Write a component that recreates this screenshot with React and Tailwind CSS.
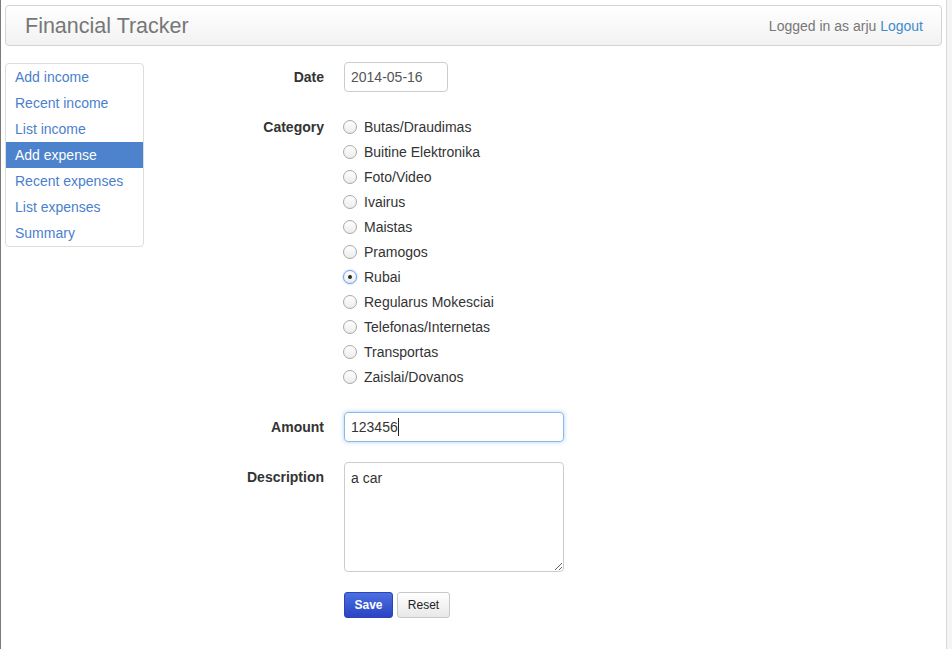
import React from 'react';

const menu = ['Add income', 'Recent income', 'List income', 'Add expense', 'Recent expenses', 'List expenses', 'Summary'];

const categories = [
  'Butas/Draudimas',
  'Buitine Elektronika',
  'Foto/Video',
  'Ivairus',
  'Maistas',
  'Pramogos',
  'Rubai',
  'Regularus Mokesciai',
  'Telefonas/Internetas',
  'Transportas',
  'Zaislai/Dovanos',
];

const Radio = ({ checked }) => (
  <span
    className={
      'w-[14px] h-[14px] rounded-full border flex items-center justify-center bg-gradient-to-b from-white to-[#ececec] ' +
      (checked ? 'border-[#6f9fe0] shadow-[0_0_2px_#8fb6f0]' : 'border-[#a8a8a8]')
    }
  >
    {checked && <span className="w-[4px] h-[4px] rounded-full bg-[#2b2b2b]" />}
  </span>
);

const Row = ({ label, children, className = '' }) => (
  <div className={'flex gap-5 ' + className}>
    <div className="w-[180px] shrink-0 text-right font-bold text-[#333] pt-[5px] leading-5">{label}</div>
    <div>{children}</div>
  </div>
);

const App = () => {
  return (
    <div
      className="flex min-h-[649px] bg-white border-l border-[#7a7a7a] text-[14px] leading-5"
      style={{ fontFamily: '"Liberation Sans", Arial, sans-serif' }}
    >
      <div className="flex-1 px-1 pt-[5px]">
        {/* navbar */}
        <div className="h-[41px] flex items-center justify-between border border-[#d4d4d4] rounded-[4px] bg-gradient-to-b from-white to-[#f2f2f2] pl-[19px] pr-[18px]">
          <span className="text-[21.5px] text-[#777]">Financial Tracker</span>
          <span className="text-[#777]">
            Logged in as arju <a className="text-[#428bca]">Logout</a>
          </span>
        </div>

        <div className="flex mt-4">
          {/* sidebar */}
          <div className="w-[139px] shrink-0 mt-px">
            <div className="border border-[#ddd] rounded-[4px] overflow-hidden">
              {menu.map((m) => (
                <div
                  key={m}
                  className={
                    'h-[26px] leading-[26px] pl-[9px] ' +
                    (m === 'Add expense' ? 'bg-[#4d82cc] text-white' : 'text-[#4a7fcd]')
                  }
                >
                  {m}
                </div>
              ))}
            </div>
          </div>

          {/* form */}
          <div className="flex flex-col">
            <Row label="Date" className="mb-5">
              <div className="w-[104px] h-[30px] border border-[#ccc] rounded-[4px] px-[6px] pt-[4px] text-[#555]">2014-05-16</div>
            </Row>

            <Row label="Category" className="mb-5">
              <div className="py-[2.5px]">
                {categories.map((c) => (
                  <div key={c} className="h-[25px] flex items-center gap-[7px] -ml-px text-[#333]">
                    <Radio checked={c === 'Rubai'} />
                    <span>{c}</span>
                  </div>
                ))}
              </div>
            </Row>

            <Row label="Amount" className="mb-5">
              <div className="w-[220px] h-[30px] border border-[#8db8ea] rounded-[4px] px-[6px] pt-[4px] text-[#333] shadow-[0_0_4px_rgba(102,175,233,0.6)] flex items-start">
                123456<span className="w-px h-[18px] bg-[#222] mt-[1px]" />
              </div>
            </Row>

            <Row label="Description" className="mb-5">
              <textarea
                readOnly
                value="a car"
                className="block w-[220px] h-[110px] border border-[#ccc] rounded-[4px] px-[6px] pt-[5px] text-[#333] leading-5 outline-none resize"
              />
            </Row>

            <Row label="">
              <div className="flex gap-[4px]">
                <button className="h-[26px] w-[49px] rounded-[3px] border border-[#2c44b8] bg-gradient-to-b from-[#4b70e0] to-[#2c42c4] text-white text-[12px] font-bold">
                  Save
                </button>
                <button className="h-[26px] w-[53px] rounded-[3px] border border-[#c8c8c8] bg-gradient-to-b from-white to-[#e8e8e8] text-[#222] text-[12px]">
                  Reset
                </button>
              </div>
            </Row>
          </div>
        </div>
      </div>

      {/* scrollbar track */}
      <div className="w-[6px] border-l border-[#d9d9d9] bg-[#f4f4f4]" />
    </div>
  );
};

export default App;
